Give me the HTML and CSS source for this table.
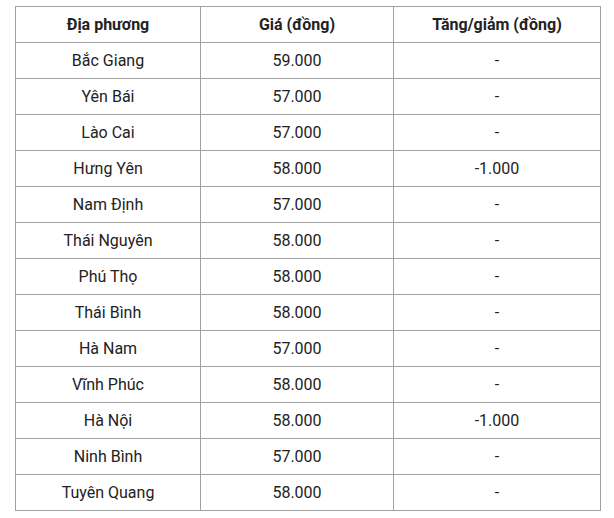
FILE: index.html
```html
<!DOCTYPE html>
<html lang="vi">
<head>
<meta charset="utf-8">
<link rel="stylesheet" href="styles.css">
</head>
<body>
<table class="price-table">
  <colgroup>
    <col class="c1"><col class="c2"><col class="c3">
  </colgroup>
  <thead>
    <tr><th>Địa phương</th><th>Giá (đồng)</th><th>Tăng/giảm (đồng)</th></tr>
  </thead>
  <tbody>
    <tr><td>Bắc Giang</td><td>59.000</td><td>-</td></tr>
    <tr><td>Yên Bái</td><td>57.000</td><td>-</td></tr>
    <tr><td>Lào Cai</td><td>57.000</td><td>-</td></tr>
    <tr><td>Hưng Yên</td><td>58.000</td><td>-1.000</td></tr>
    <tr><td>Nam Định</td><td>57.000</td><td>-</td></tr>
    <tr><td>Thái Nguyên</td><td>58.000</td><td>-</td></tr>
    <tr><td>Phú Thọ</td><td>58.000</td><td>-</td></tr>
    <tr><td>Thái Bình</td><td>58.000</td><td>-</td></tr>
    <tr><td>Hà Nam</td><td>57.000</td><td>-</td></tr>
    <tr><td>Vĩnh Phúc</td><td>58.000</td><td>-</td></tr>
    <tr><td>Hà Nội</td><td>58.000</td><td>-1.000</td></tr>
    <tr><td>Ninh Bình</td><td>57.000</td><td>-</td></tr>
    <tr><td>Tuyên Quang</td><td>58.000</td><td>-</td></tr>
  </tbody>
</table>
</body>
</html>
```
FILE: styles.css
```css
html, body {
  margin: 0;
  background: #ffffff;
}
body {
  padding: 6px 15px;
  font-family: Roboto, "Liberation Sans", Arial, sans-serif;
  font-size: 16px;
  color: #222222;
}
.price-table {
  border-collapse: collapse;
  table-layout: fixed;
  width: 585px;
}
.c1 { width: 185px; }
.c2 { width: 193px; }
.c3 { width: 207px; }
.price-table th,
.price-table td {
  border: 1px solid #a0a0a0;
  height: 36px;
  padding: 0 4px;
  text-align: center;
  vertical-align: middle;
  box-sizing: border-box;
  line-height: 18px;
}
.price-table th {
  font-weight: 700;
}
```
